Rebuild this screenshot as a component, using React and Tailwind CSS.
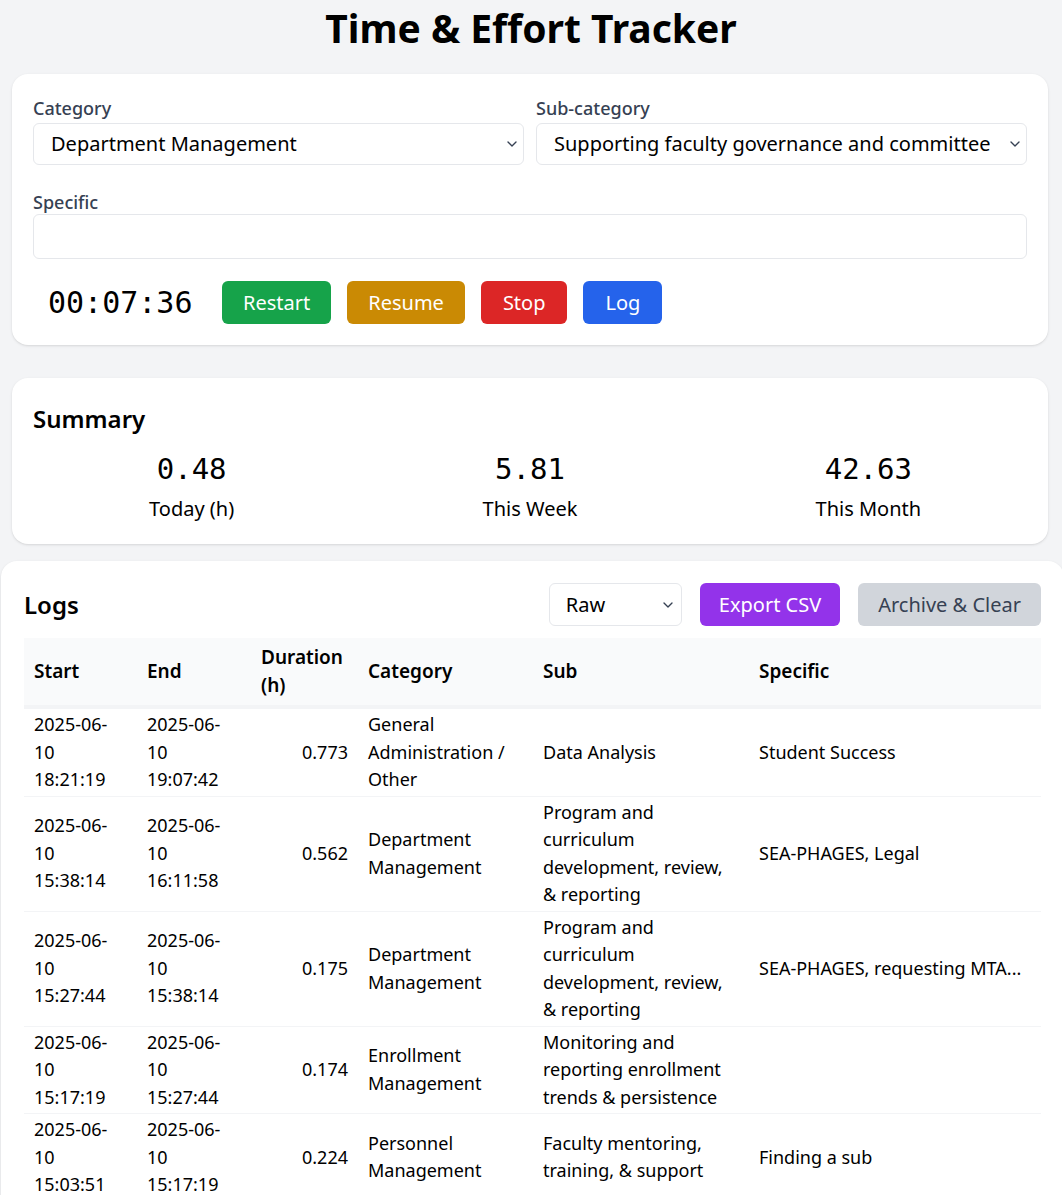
import { ChevronDown } from 'lucide-react'

const logs = [
  { start: ['2025-06-', '10', '18:21:19'], end: ['2025-06-', '10', '19:07:42'], dur: '0.773', cat: 'General Administration / Other', sub: 'Data Analysis', spec: 'Student Success' },
  { start: ['2025-06-', '10', '15:38:14'], end: ['2025-06-', '10', '16:11:58'], dur: '0.562', cat: 'Department Management', sub: 'Program and curriculum development, review, & reporting', spec: 'SEA-PHAGES, Legal' },
  { start: ['2025-06-', '10', '15:27:44'], end: ['2025-06-', '10', '15:38:14'], dur: '0.175', cat: 'Department Management', sub: 'Program and curriculum development, review, & reporting', spec: 'SEA-PHAGES, requesting MTA...' },
  { start: ['2025-06-', '10', '15:17:19'], end: ['2025-06-', '10', '15:27:44'], dur: '0.174', cat: 'Enrollment Management', sub: 'Monitoring and reporting enrollment trends & persistence', spec: '' },
  { start: ['2025-06-', '10', '15:03:51'], end: ['2025-06-', '10', '15:17:19'], dur: '0.224', cat: 'Personnel Management', sub: 'Faculty mentoring, training, & support', spec: 'Finding a sub' },
]

const mono = { fontFamily: '"DejaVu Sans Mono", monospace' }

function Select({ value, className = '' }) {
  return (
    <div className={`relative ${className}`}>
      <select
        defaultValue={value}
        className="w-full h-[42px] appearance-none rounded-md border border-gray-200 bg-white pl-[17px] pr-9 text-[20px] text-black outline-none"
      >
        <option>{value}</option>
      </select>
      <ChevronDown size={16} strokeWidth={2} className="pointer-events-none absolute right-[4px] top-[13px] text-gray-700" />
    </div>
  )
}

export default function App() {
  return (
    <div className="min-h-screen overflow-x-hidden bg-gray-100 pb-10 text-black" style={{ fontFamily: '"Noto Sans", sans-serif' }}>
      <h1 className="pt-[2px] text-center text-[39px] font-bold leading-[52px]">Time &amp; Effort Tracker</h1>

      {/* Timer card */}
      <div className="mt-5 ml-3 w-[1036px] rounded-2xl bg-white px-[21px] pt-[22px] pb-[21px] shadow">
        <div className="grid grid-cols-2 gap-3">
          <div>
            <label className="block text-[18px] font-medium leading-6 text-gray-700">Category</label>
            <Select value="Department Management" className="mt-[3px]" />
          </div>
          <div>
            <label className="block text-[18px] font-medium leading-6 text-gray-700">Sub-category</label>
            <Select value="Supporting faculty governance and committee work" className="mt-[3px]" />
          </div>
        </div>
        <label className="mt-[25px] block text-[18px] font-medium leading-6 text-gray-700">Specific</label>
        <input className="block h-[45px] w-full rounded-md border border-gray-200 px-3 text-[20px] outline-none" />
        <div className="mt-[22px] flex items-center gap-4">
          <span className="w-[173px] pl-[15px] text-[30px] leading-[43px]" style={mono}>00:07:36</span>
          <button className="h-[43px] rounded-md bg-[#16a34a] px-[21px] text-[20px] text-white">Restart</button>
          <button className="h-[43px] rounded-md bg-[#ca8a04] px-[21px] text-[20px] text-white">Resume</button>
          <button className="h-[43px] rounded-md bg-[#dc2626] px-[22px] text-[20px] text-white">Stop</button>
          <button className="h-[43px] rounded-md bg-[#2563eb] px-[22px] text-[20px] text-white">Log</button>
        </div>
      </div>

      {/* Summary */}
      <div className="mt-[33px] ml-3 w-[1036px] rounded-2xl bg-white px-[21px] pt-[25px] pb-[21px] shadow">
        <h2 className="text-[24px] font-semibold leading-8">Summary</h2>
        <div className="mt-[16px] grid grid-cols-3 gap-[21px] text-center">
          {[['0.48', 'Today (h)'], ['5.81', 'This Week'], ['42.63', 'This Month']].map(([v, l]) => (
            <div key={l}>
              <div className="text-[29px] leading-[36px]" style={mono}>{v}</div>
              <div className="mt-[8px] text-[20px] leading-[28px]">{l}</div>
            </div>
          ))}
        </div>
      </div>

      {/* Logs */}
      <div className="mt-[17px] ml-[1px] w-[1063px] rounded-2xl bg-white px-[23px] pt-[22px] pb-6 shadow">
        <div className="flex items-center justify-between">
          <h2 className="text-[24px] font-semibold leading-8">Logs</h2>
          <div className="flex items-center gap-[18px]">
            <div className="relative w-[133px]">
              <select defaultValue="Raw" className="h-[43px] w-full appearance-none rounded-md border border-gray-200 bg-white pl-[16px] text-[20px] outline-none">
                <option>Raw</option>
              </select>
              <ChevronDown size={16} strokeWidth={2} className="pointer-events-none absolute right-[6px] top-[14px] text-gray-700" />
            </div>
            <button className="h-[43px] rounded-md bg-[#9333ea] px-[19px] text-[20px] text-white">Export CSV</button>
            <button className="h-[43px] rounded-md bg-[#d1d5db] px-[20px] text-[20px] text-gray-700">Archive &amp; Clear</button>
          </div>
        </div>

        <table className="mt-3 w-[1017px] table-fixed border-collapse text-[18px] leading-[27.5px]">
          <colgroup>
            <col className="w-[113px]" />
            <col className="w-[114px]" />
            <col className="w-[107px]" />
            <col className="w-[175px]" />
            <col className="w-[216px]" />
            <col />
          </colgroup>
          <thead>
            <tr className="border-b-4 border-gray-100 bg-gray-50 text-left text-[19px]">
              <th className="px-[10px] py-[6px] font-semibold">Start</th>
              <th className="px-[10px] py-[6px] font-semibold">End</th>
              <th className="px-[10px] py-[6px] font-semibold">Duration (h)</th>
              <th className="px-[10px] py-[6px] font-semibold">Category</th>
              <th className="px-[10px] py-[6px] font-semibold">Sub</th>
              <th className="px-[10px] py-[6px] font-semibold">Specific</th>
            </tr>
          </thead>
          <tbody>
            {logs.map((r, i) => (
              <tr key={i} className="border-b border-gray-100 align-middle">
                <td className="px-[10px] py-[2px]">{r.start.map(s => <div key={s}>{s}</div>)}</td>
                <td className="px-[10px] py-[2px]">{r.end.map(s => <div key={s}>{s}</div>)}</td>
                <td className="px-[10px] py-[2px] text-right">{r.dur}</td>
                <td className="px-[10px] py-[2px]">{r.cat}</td>
                <td className="px-[10px] py-[2px]">{r.sub}</td>
                <td className="px-[10px] py-[2px] whitespace-nowrap">{r.spec}</td>
              </tr>
            ))}
          </tbody>
        </table>
      </div>
    </div>
  )
}
